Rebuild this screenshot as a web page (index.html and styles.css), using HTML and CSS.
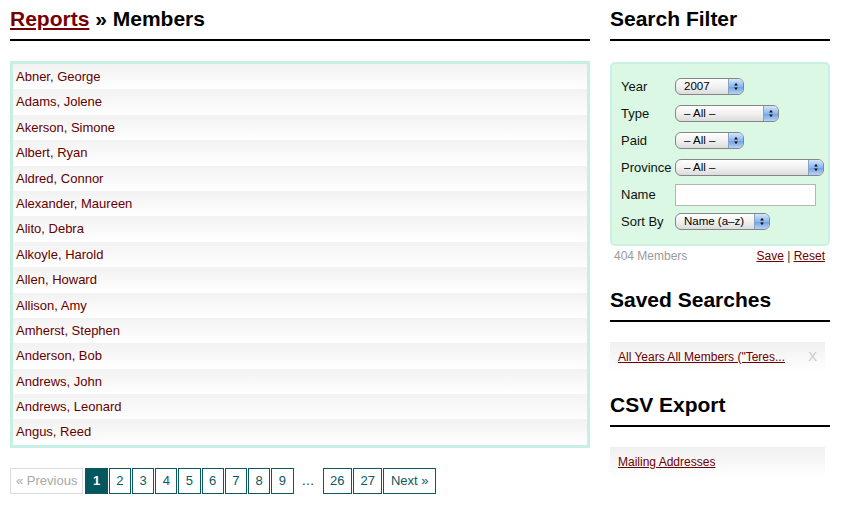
FILE: index.html
```html
<!DOCTYPE html>
<html>
<head>
<meta charset="utf-8">
<link rel="stylesheet" href="styles.css">
</head>
<body>
<div class="page">
  <div class="main">
    <h1 class="heading"><a href="#" class="crumb">Reports</a> » Members</h1>
    <ul class="members">
      <li><a href="#">Abner, George</a></li>
      <li><a href="#">Adams, Jolene</a></li>
      <li><a href="#">Akerson, Simone</a></li>
      <li><a href="#">Albert, Ryan</a></li>
      <li><a href="#">Aldred, Connor</a></li>
      <li><a href="#">Alexander, Maureen</a></li>
      <li><a href="#">Alito, Debra</a></li>
      <li><a href="#">Alkoyle, Harold</a></li>
      <li><a href="#">Allen, Howard</a></li>
      <li><a href="#">Allison, Amy</a></li>
      <li><a href="#">Amherst, Stephen</a></li>
      <li><a href="#">Anderson, Bob</a></li>
      <li><a href="#">Andrews, John</a></li>
      <li><a href="#">Andrews, Leonard</a></li>
      <li><a href="#">Angus, Reed</a></li>
    </ul>
    <div class="pager">
      <span class="pg pg-disabled">« Previous</span>
      <span class="pg pg-current">1</span>
      <a href="#" class="pg">2</a>
      <a href="#" class="pg">3</a>
      <a href="#" class="pg">4</a>
      <a href="#" class="pg">5</a>
      <a href="#" class="pg">6</a>
      <a href="#" class="pg">7</a>
      <a href="#" class="pg">8</a>
      <a href="#" class="pg">9</a>
      <span class="pg-gap">…</span>
      <a href="#" class="pg">26</a>
      <a href="#" class="pg">27</a>
      <a href="#" class="pg">Next »</a>
    </div>
  </div>
  <aside class="side">
    <h2 class="heading">Search Filter</h2>
    <div class="filter">
      <label class="flabel">Year</label>
      <span class="sel sel-year"><span class="sel-text">2007</span><span class="sel-arrow"><svg width="15" height="15" viewBox="0 0 15 15"><path d="M5.5 6.5 L7.5 3.5 L9.5 6.5 Z M5.5 8.5 L9.5 8.5 L7.5 11.5 Z" fill="#111"/></svg></span></span>
      <label class="flabel">Type</label>
      <span class="sel sel-type"><span class="sel-text">– All –</span><span class="sel-arrow"><svg width="15" height="15" viewBox="0 0 15 15"><path d="M5.5 6.5 L7.5 3.5 L9.5 6.5 Z M5.5 8.5 L9.5 8.5 L7.5 11.5 Z" fill="#111"/></svg></span></span>
      <label class="flabel">Paid</label>
      <span class="sel sel-paid"><span class="sel-text">– All –</span><span class="sel-arrow"><svg width="15" height="15" viewBox="0 0 15 15"><path d="M5.5 6.5 L7.5 3.5 L9.5 6.5 Z M5.5 8.5 L9.5 8.5 L7.5 11.5 Z" fill="#111"/></svg></span></span>
      <label class="flabel">Province</label>
      <span class="sel sel-prov"><span class="sel-text">– All –</span><span class="sel-arrow"><svg width="15" height="15" viewBox="0 0 15 15"><path d="M5.5 6.5 L7.5 3.5 L9.5 6.5 Z M5.5 8.5 L9.5 8.5 L7.5 11.5 Z" fill="#111"/></svg></span></span>
      <label class="flabel">Name</label>
      <input class="name-input" type="text">
      <label class="flabel">Sort By</label>
      <span class="sel sel-sort"><span class="sel-text">Name (a–z)</span><span class="sel-arrow"><svg width="15" height="15" viewBox="0 0 15 15"><path d="M5.5 6.5 L7.5 3.5 L9.5 6.5 Z M5.5 8.5 L9.5 8.5 L7.5 11.5 Z" fill="#111"/></svg></span></span>
    </div>
    <div class="filter-foot">
      <span class="count">404 Members</span>
      <span class="actions"><a href="#">Save</a> | <a href="#">Reset</a></span>
    </div>
    <h2 class="heading heading-sub">Saved Searches</h2>
    <div class="item"><a href="#">All Years All Members ("Teres...</a><span class="remove">X</span></div>
    <h2 class="heading heading-sub">CSV Export</h2>
    <div class="item"><a href="#">Mailing Addresses</a></div>
  </aside>
</div>
</body>
</html>
```

FILE: styles.css
```css
* { box-sizing: border-box; }
body {
  margin: 0;
  font-family: "Liberation Sans", Arial, sans-serif;
  color: #000;
  background: #fff;
}
.page {
  display: flex;
  gap: 20px;
  padding: 0 10px;
}
.main { width: 580px; }
.side { width: 220px; }

.heading {
  margin: 7px 0 0;
  font-size: 21px;
  line-height: 24px;
  font-weight: bold;
  padding-bottom: 8px;
  border-bottom: 2px solid #000;
}
.crumb { color: #760000; text-decoration: underline; }

.members {
  list-style: none;
  margin: 20px 0 0;
  padding: 0;
  border: 3px solid #c8efe3;
}
.members li {
  height: 25.4px;
  line-height: 25.4px;
  padding-left: 3px;
  font-size: 13px;
  background: linear-gradient(#f2f2f2, #ffffff);
}
.members a { color: #640000; text-decoration: none; }

.pager {
  display: flex;
  gap: 1px;
  margin-top: 20px;
  font-size: 13px;
}
.pg {
  display: block;
  border: 1px solid #0a5a62;
  color: #0a5a62;
  line-height: 24px;
  padding: 0 6.5px;
  text-decoration: none;
}
.pg-disabled {
  border-color: #dcdcdc;
  color: #a8a8a8;
  padding: 0 5px;
  margin-right: 1px;
}
.pg-current {
  background: #04565f;
  color: #fff;
  font-weight: bold;
}
.pg-gap {
  line-height: 26px;
  padding: 0 7px;
  color: #333;
}

.filter {
  margin-top: 21px;
  background: #daf8e4;
  border: 2px solid #c9f0e1;
  border-radius: 5px;
  padding: 9px 4px 9px 9px;
  display: grid;
  grid-template-columns: 54px 1fr;
  grid-auto-rows: 27px;
  align-items: center;
}
.flabel { font-size: 13px; color: #111; }
.sel {
  display: flex;
  height: 17px;
  border: 1px solid #858585;
  border-radius: 6px;
  background: linear-gradient(#ffffff, #f1f1f1 50%, #dcdcdc);
  font-size: 11.5px;
  overflow: hidden;
}
.sel-text {
  flex: 1;
  padding-left: 8px;
  line-height: 15px;
  white-space: nowrap;
}
.sel-arrow {
  width: 15px;
  border-left: 1px solid #8aa2c2;
  background: linear-gradient(#d4e6fb, #8bb6ee 50%, #6d9fe3 51%, #b5d3f7);
  display: flex;
  align-items: center;
  justify-content: center;
}
.sel-year { width: 69px; }
.sel-type { width: 104px; }
.sel-paid { width: 69px; }
.sel-prov { width: 149px; }
.sel-sort { width: 95px; }
.name-input {
  width: 141px;
  height: 22px;
  border: 1px solid #b5b5b5;
  background: #fff;
  margin: 0;
}

.filter-foot {
  display: flex;
  justify-content: space-between;
  margin-top: 3px;
  padding: 0 5px 0 4px;
  font-size: 12px;
  line-height: 15px;
}
.count { color: #9a9a9a; }
.actions { color: #333; }
.actions a { color: #6e0000; text-decoration: underline; }

.heading-sub { margin-top: 24px; }
.item + .heading-sub { margin-top: 21px; }
.item {
  display: flex;
  justify-content: space-between;
  margin-top: 20px;
  margin-right: 5px;
  height: 30px;
  line-height: 30px;
  padding: 0 8px;
  font-size: 12px;
  background: linear-gradient(#f0f0f0, #ffffff);
}
.item a { color: #6e0000; text-decoration: underline; }
.remove { color: #c8c8c8; font-size: 13px; }
```
